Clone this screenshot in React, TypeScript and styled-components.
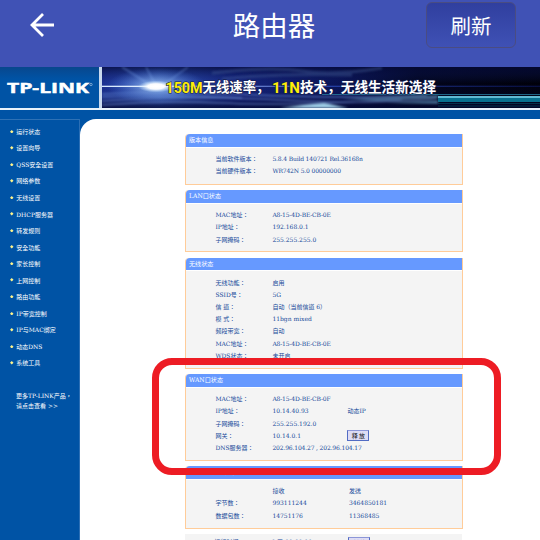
import React from "react";
import styled, { createGlobalStyle } from "styled-components";

const Global = createGlobalStyle`
  * { box-sizing: border-box; }
  html, body { margin: 0; padding: 0; background: #fff; overflow: hidden; }
`;

const serif = `"DejaVu Serif", "Noto Sans CJK TC", "Noto Sans CJK SC", serif`;
const sans = `"Noto Sans CJK SC", sans-serif`;

const Screen = styled.div`
  position: relative;
  width: 540px;
  height: 540px;
  overflow: hidden;
  display: flex;
  flex-direction: column;
  background: #fff;
  font-family: ${serif};
`;

const AppBar = styled.header`
  flex: none;
  height: 67px;
  display: grid;
  grid-template-columns: 115px 1fr 115px;
  align-items: start;
  background: #4052b5;
  color: #fff;
  font-family: ${sans};
`;

const BackIcon = styled.svg`
  width: 26px;
  height: 26px;
  margin: 12px 0 0 29px;
  display: block;
`;

const Title = styled.h1`
  margin: 4px 0 0 8px;
  font-size: 27.5px;
  line-height: 40px;
  font-weight: 400;
  text-align: center;
`;

const Refresh = styled.button`
  width: 90px;
  height: 46px;
  margin: 2px 0 0 1px;
  padding: 0;
  border: 1px solid #4a4c82;
  border-radius: 6px;
  background: linear-gradient(#303f9f, #3f51b5);
  color: #fff;
  font-family: ${sans};
  font-size: 20.5px;
  line-height: 42px;
`;

const Banner = styled.div`
  flex: none;
  height: 41px;
  display: flex;
  background: #0053a5;
`;

const LogoBox = styled.div`
  flex: none;
  width: 102px;
  border-right: 3px solid #c9d9ee;
  background: linear-gradient(#08478d, #0053a5 12px);
`;

const Art = styled.svg`
  display: block;
`;

const Strip = styled.div`
  flex: none;
  height: 11px;
  border-top: 2px solid #e9f2fb;
  background: #0053a5;
`;

const Main = styled.div`
  flex: 1;
  display: flex;
  min-height: 0;
  background: #0053a5;
`;

const Sidebar = styled.nav`
  flex: none;
  width: 80px;
  padding-top: 4px;
  border-right: 1px solid #2c6fb5;
  box-shadow: inset 0 1px 0 -0.3px #3e7cbb;
  color: #fff;
  font-size: 6px;
  white-space: nowrap;
`;

const NavItem = styled.div`
  height: 16.55px;
  display: flex;
  align-items: center;
  padding-left: 10.3px;
  gap: 2.5px;
`;

const Bullet = styled.svg`
  width: 3.5px;
  height: 3.5px;
  flex: none;
`;

const More = styled.p`
  margin: 20px 0 0 16px;
  line-height: 10px;
`;

const Content = styled.main`
  flex: 1;
  padding: 15px 0 0 105px;
  background: #fff;
  border-top-left-radius: 16px;
  overflow: hidden;
`;

const Panel = styled.section<{ $h: number; $gap: number }>`
  width: 278px;
  height: ${(p) => p.$h}px;
  margin-bottom: ${(p) => p.$gap}px;
  border: solid #ffcc99;
  border-width: 0 1.4px 1.4px;
  border-top-left-radius: 4px;
  background: #f4f4f4;
  color: #164a9a;
  font-size: 6px;
  white-space: nowrap;
`;

const PanelHead = styled.h2`
  height: 13.5px;
  margin: 0;
  padding-left: 3px;
  border-bottom: 1px solid #fff;
  border-top-left-radius: 4px;
  background: #6699ff;
  color: #fff;
  font-size: 6.1px;
  font-weight: 400;
  line-height: 12.5px;
`;

const Rows = styled.div`
  padding-top: 5.5px;
`;

const Row = styled.div<{ $shift?: number }>`
  height: 12.22px;
  display: grid;
  grid-template-columns: 57px ${(p) => 75 + (p.$shift ?? 0)}px 1fr;
  align-items: center;
  padding-left: 29.4px;
  line-height: 12px;
`;

const Cell = styled.span<{ $tight?: boolean }>`
  letter-spacing: ${(p) => (p.$tight ? -0.15 : 0)}px;
`;

const SmallButton = styled.button`
  width: 22px;
  height: 11px;
  padding: 0;
  border: 1px solid #526cc4;
  border-top-color: #8c96d8;
  background: #dedcf4;
  color: #111;
  font-family: ${sans};
  font-size: 5.9px;
  line-height: 9px;
  display: block;
`;

const Footer = styled.div`
  height: 20px;
  width: 277px;
  padding-top: 2px;
  background: #f4f4f4;
  color: #164a9a;
  font-size: 6px;
`;

const Highlight = styled.div`
  position: absolute;
  left: 152px;
  top: 358px;
  width: 349px;
  height: 117px;
  border: 7px solid #ed1c24;
  border-radius: 20px;
`;

type RowData = [string, string, string?];
interface PanelData {
  title: string;
  h: number;
  gap: number;
  shift?: number;
  rows: RowData[];
}

const panels: PanelData[] = [
  { title: "版本信息", h: 50.5, gap: 5.5, rows: [["当前软件版本：", "5.8.4 Build 140721 Rel.36168n"], ["当前硬件版本：", "WR742N 5.0 00000000"]] },
  { title: "LAN口状态", h: 62, gap: 5.5, rows: [["MAC地址：", "A8-15-4D-BE-CB-0E"], ["IP地址：", "192.168.0.1"], ["子网掩码：", "255.255.255.0"]] },
  {
    title: "无线状态", h: 111.5, gap: 5,
    rows: [["无线功能：", "启用"], ["SSID号：", "5G"], ["信 道：", "自动（当前信道 6）"], ["模 式：", "11bgn mixed"], ["频段带宽：", "自动"], ["MAC地址：", "A8-15-4D-BE-CB-0E"], ["WDS状态：", "未开启"]],
  },
  {
    title: "WAN口状态", h: 87, gap: 5,
    rows: [["MAC地址：", "A8-15-4D-BE-CB-0F"], ["IP地址：", "10.14.40.93", "动态IP"], ["子网掩码：", "255.255.192.0"], ["网关：", "10.14.0.1", "button"], ["DNS服务器：", "202.96.104.27 , 202.96.104.17"]],
  },
  { title: "WAN口流量统计", h: 62.5, gap: 5.5, shift: 1.5, rows: [["", "接收", "发送"], ["字节数：", "993111244", "3464850181"], ["数据包数：", "14751176", "11368485"]] },
];

const nav = ["运行状态", "设置向导", "QSS安全设置", "网络参数", "无线设置", "DHCP服务器", "转发规则", "安全功能", "家长控制", "上网控制", "路由功能", "IP带宽控制", "IP与MAC绑定", "动态DNS", "系统工具"];

function Logo() {
  return (
    <Art width="99" height="41">
      <text x="7" y="25.7" textLength="82" lengthAdjust="spacingAndGlyphs" fill="#fff" stroke="#fff" strokeWidth="0.5" fontFamily="Open Sans, sans-serif" fontWeight="700" fontSize="14.5">TP-LINK</text>
      <circle cx="91" cy="17.5" r="1.2" fill="none" stroke="#b8d0e8" strokeWidth="0.6" />
    </Art>
  );
}

function Slogan() {
  return (
    <Art width="438" height="41">
      <defs>
        <linearGradient id="sky" x2="1">
          <stop offset="0" stopColor="#1c3191" />
          <stop offset=".13" stopColor="#3157b8" />
          <stop offset=".3" stopColor="#16257f" />
          <stop offset=".55" stopColor="#0a1353" />
          <stop offset=".72" stopColor="#02051c" />
          <stop offset="1" stopColor="#00000a" />
        </linearGradient>
        <linearGradient id="shade" x2="0" y2="1">
          <stop offset="0" stopColor="#050a38" stopOpacity=".75" />
          <stop offset=".4" stopColor="#10206c" stopOpacity="0" />
          <stop offset=".75" stopColor="#050a38" stopOpacity=".25" />
          <stop offset="1" stopColor="#030830" stopOpacity=".8" />
        </linearGradient>
        <radialGradient id="flare">
          <stop offset="0" stopColor="#fff" />
          <stop offset=".2" stopColor="#b5dbff" stopOpacity=".9" />
          <stop offset="1" stopColor="#4b80e6" stopOpacity="0" />
        </radialGradient>
        <radialGradient id="core">
          <stop offset="0" stopColor="#fff" />
          <stop offset=".45" stopColor="#fff" stopOpacity=".95" />
          <stop offset="1" stopColor="#bfe0ff" stopOpacity="0" />
        </radialGradient>
        <linearGradient id="beam" x2="1">
          <stop offset="0" stopColor="#d5e8ff" />
          <stop offset=".12" stopColor="#e6f2ff" />
          <stop offset=".5" stopColor="#3354c8" stopOpacity=".7" />
          <stop offset="1" stopColor="#101c70" stopOpacity=".5" />
        </linearGradient>
        <filter id="soft" x="-20%" y="-40%" width="140%" height="180%">
          <feGaussianBlur stdDeviation="0.9" />
        </filter>
      </defs>
      <rect width="438" height="41" fill="url(#sky)" />
      <rect width="438" height="41" fill="url(#shade)" />
      <g filter="url(#soft)">
        <path d="M50 19L20 0M54 19L44 0M60 19L86 0" stroke="#7fa9f0" strokeOpacity=".4" strokeWidth="1.5" />
        <path d="M110 6q60-7 90-2t80-3M120 12q60-6 130-4" fill="none" stroke="#46629c" strokeOpacity=".4" strokeWidth="3" />
        <path d="M0 27q60-3 155 1t170 0M0 30q60-3 140 1" fill="none" stroke="#7ba5f0" strokeOpacity=".55" strokeWidth="1.3" />
        <path d="M0 34q80-6 180-1t155-2M0 38q60-5 120-2t180-3" fill="none" stroke="#7b9de0" strokeOpacity=".5" strokeWidth="1.5" />
        <path d="M178 41l24-3 20-2 24 5z" fill="#9ccbe4" />
        <path d="M240 32l96-4v3l-60 3zM285 36l51-3v4z" fill="#5b8fb8" opacity=".65" />
      </g>
      <ellipse cx="55" cy="19" rx="50" ry="18" fill="url(#flare)" opacity=".65" />
      <rect y="18.7" width="438" height="1.3" fill="url(#beam)" />
      <ellipse cx="54" cy="19.5" rx="18" ry="6" fill="url(#core)" />
      <path d="M220 27.5h218" stroke="#277da0" strokeOpacity=".8" />
      <rect x="336" y="29" width="102" height="6" fill="#08708e" />
      <path d="M336 30h102" stroke="#7fd3ea" strokeWidth="1.5" />
      <path d="M336 36.5h102M336 39h102" stroke="#075068" strokeWidth=".6" />
      <g fontFamily="Noto Sans CJK SC, sans-serif" fontWeight="700" fontSize="13.3" stroke="#16204f" strokeWidth="1.2" paintOrder="stroke">
        <text x="63.5" y="25.7" fill="#ffee08" fontFamily="Roboto, sans-serif" fontSize="14.8" textLength="37" lengthAdjust="spacingAndGlyphs">150M</text>
        <text x="100.5" y="25.4" fill="#fff" textLength="67" lengthAdjust="spacingAndGlyphs">无线速率，</text>
        <text x="170" y="25.7" fill="#ffee08" fontFamily="Roboto, sans-serif" fontSize="14.8" textLength="28" lengthAdjust="spacingAndGlyphs">11N</text>
        <text x="198" y="25.4" fill="#fff" textLength="136" lengthAdjust="spacingAndGlyphs">技术，无线生活新选择</text>
      </g>
    </Art>
  );
}

export default function App() {
  return (
    <Screen>
      <Global />
      <AppBar>
        <BackIcon viewBox="0 0 26 26">
          <path d="M14 2L3 13L14 24M3 13H25" fill="none" stroke="#fff" strokeWidth="2.8" />
        </BackIcon>
        <Title>路由器</Title>
        <Refresh>刷新</Refresh>
      </AppBar>
      <Banner>
        <LogoBox><Logo /></LogoBox>
        <Slogan />
      </Banner>
      <Strip />
      <Main>
        <Sidebar>
          {nav.map((n) => (
            <NavItem key={n}>
              <Bullet viewBox="0 0 4 4"><path d="M2 0L4 2L2 4L0 2Z" fill="#fff58a" /></Bullet>
              {n}
            </NavItem>
          ))}
          <More>更多TP-LINK产品，<br />请点击查看 &gt;&gt;</More>
        </Sidebar>
        <Content>
          {panels.map((p) => (
            <Panel key={p.title} $h={p.h} $gap={p.gap}>
              <PanelHead>{p.title}</PanelHead>
              <Rows>
                {p.rows.map((r, i) => (
                  <Row key={i} $shift={p.shift}>
                    <Cell>{r[0]}</Cell>
                    <Cell $tight={r[1].length > 15}>{r[1]}</Cell>
                    {r[2] === "button" ? <SmallButton>释 放</SmallButton> : <Cell>{r[2]}</Cell>}
                  </Row>
                ))}
              </Rows>
            </Panel>
          ))}
          <Footer>
            <Row $shift={2}>
              <Cell>运行时间：</Cell>
              <Cell>0 天 00:00:00</Cell>
              <SmallButton>断 线</SmallButton>
            </Row>
          </Footer>
        </Content>
      </Main>
      <Highlight />
    </Screen>
  );
}
